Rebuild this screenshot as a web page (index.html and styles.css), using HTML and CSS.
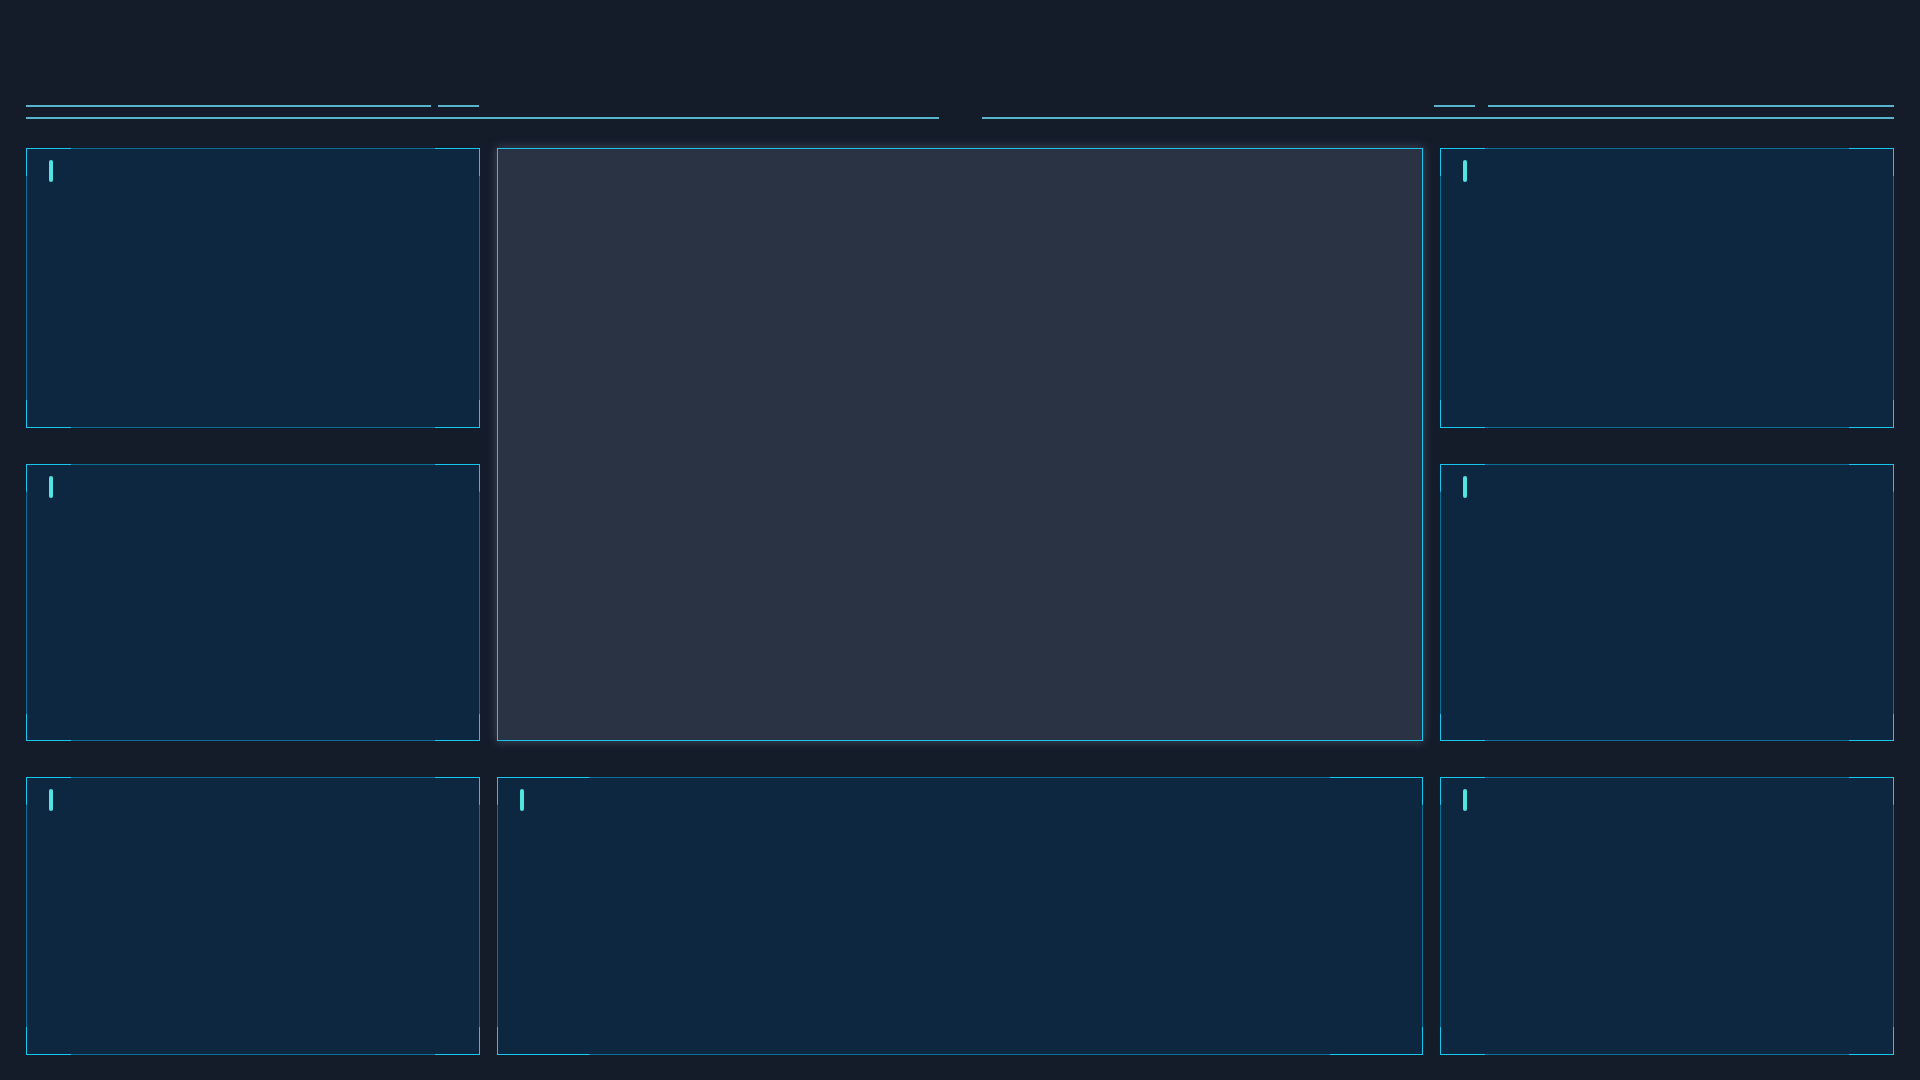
FILE: index.html
```html
<!DOCTYPE html>
<html lang="en">
<head>
<meta charset="utf-8">
<title>Dashboard</title>
<link rel="stylesheet" href="styles.css">
</head>
<body>
<div class="screen">
  <header class="header">
    <div class="head-side head-left">
      <div class="head-top">
        <span class="hline long"></span>
        <span class="hline short"></span>
      </div>
      <span class="hline full"></span>
    </div>
    <div class="head-title"></div>
    <div class="head-side head-right">
      <div class="head-top">
        <span class="hline short"></span>
        <span class="hline long"></span>
      </div>
      <span class="hline full"></span>
    </div>
  </header>
  <main class="grid">
    <section class="panel p-l1"><i class="mark"></i></section>
    <section class="stage"></section>
    <section class="panel p-r1"><i class="mark"></i></section>
    <section class="panel p-l2"><i class="mark"></i></section>
    <section class="panel p-r2"><i class="mark"></i></section>
    <section class="panel p-l3"><i class="mark"></i></section>
    <section class="panel p-c3"><i class="mark"></i></section>
    <section class="panel p-r3"><i class="mark"></i></section>
  </main>
</div>
</body>
</html>
```
FILE: styles.css
```css
* { box-sizing: border-box; }
html, body {
  margin: 0;
  padding: 0;
  background: #141c2a;
  font-family: "Noto Sans", "Liberation Sans", sans-serif;
}
.screen {
  width: 1920px;
  height: 1080px;
  padding: 0 26px 25px;
  display: flex;
  flex-direction: column;
}
.header {
  height: 148px;
  flex: none;
  display: flex;
  align-items: flex-end;
  padding-bottom: 29px;
}
.head-side {
  flex: 1;
  display: flex;
  flex-direction: column;
  gap: 10px;
}
.head-title { width: 43px; flex: none; }
.head-top { display: flex; }
.head-left .head-top { gap: 7px; }
.head-right .head-top { gap: 13px; justify-content: flex-end; }
.hline {
  display: block;
  height: 2px;
  background: #58b4ca;
}
.head-left .long { width: 405px; }
.head-right .long { width: 406px; }
.short { width: 41px; }
.full { width: 100%; }

.grid {
  flex: 1;
  display: grid;
  grid-template-columns: 454fr 926fr 454fr;
  grid-template-rows: 280fr 278fr 278fr;
  column-gap: 17px;
  row-gap: 36px;
}
.panel {
  position: relative;
  background: #0e2740;
  border: 1px solid #0b6f97;
  padding: 11px 22px;
}
.panel::before {
  content: "";
  position: absolute;
  inset: -1px;
  pointer-events: none;
  background:
    linear-gradient(#19c6ee, #19c6ee) left top / 10% 1px no-repeat,
    linear-gradient(#19c6ee, #19c6ee) left top / 1px 10% no-repeat,
    linear-gradient(#19c6ee, #19c6ee) right top / 10% 1px no-repeat,
    linear-gradient(#19c6ee, #19c6ee) right top / 1px 10% no-repeat,
    linear-gradient(#19c6ee, #19c6ee) left bottom / 10% 1px no-repeat,
    linear-gradient(#19c6ee, #19c6ee) left bottom / 1px 10% no-repeat,
    linear-gradient(#19c6ee, #19c6ee) right bottom / 10% 1px no-repeat,
    linear-gradient(#19c6ee, #19c6ee) right bottom / 1px 10% no-repeat;
}
.mark {
  display: block;
  width: 4px;
  height: 22px;
  border-radius: 2px;
  background: #52e4e2;
}
.stage {
  grid-column: 2;
  grid-row: 1 / span 2;
  background: #2a3343;
  border: 1px solid #1cc3ec;
  box-shadow: 0 0 9px 1px rgba(110, 120, 140, 0.45);
}
.p-l1 { grid-column: 1; grid-row: 1; }
.p-r1 { grid-column: 3; grid-row: 1; }
.p-l2 { grid-column: 1; grid-row: 2; }
.p-r2 { grid-column: 3; grid-row: 2; }
.p-l3 { grid-column: 1; grid-row: 3; }
.p-c3 { grid-column: 2; grid-row: 3; }
.p-r3 { grid-column: 3; grid-row: 3; }
```
